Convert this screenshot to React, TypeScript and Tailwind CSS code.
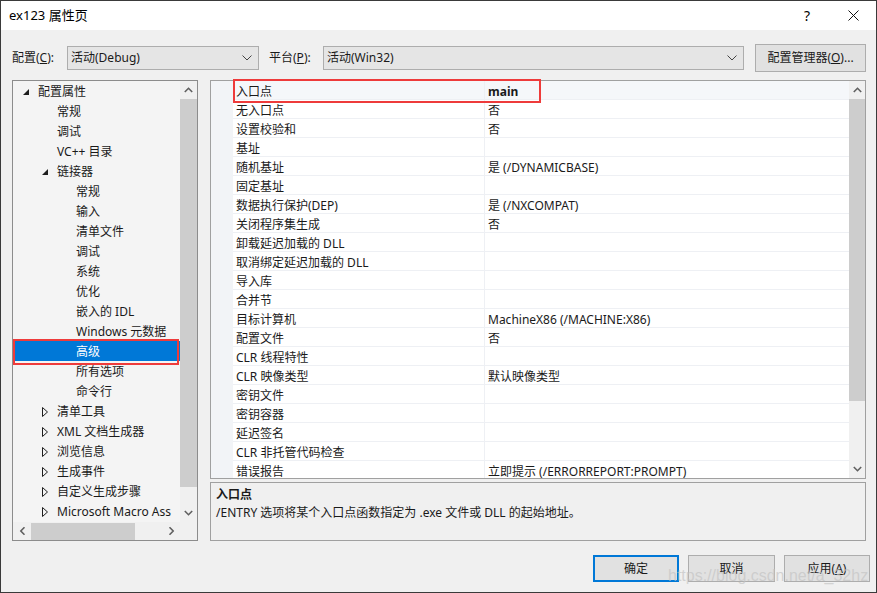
import React from "react";

const FONT = '"Noto Sans","Noto Sans CJK SC",sans-serif';

function Chevron({ dir, className = "" }: { dir: "up" | "down" | "left" | "right"; className?: string }) {
  const rot = { up: 0, right: 90, down: 180, left: 270 }[dir];
  return (
    <svg width="9" height="6" viewBox="0 0 9 6" className={className} style={{ transform: `rotate(${rot}deg)` }}>
      <path d="M0.8 5 L4.5 1.3 L8.2 5" fill="none" stroke="#606060" strokeWidth="1.6" />
    </svg>
  );
}

function ComboChevron() {
  return (
    <svg width="10" height="6" viewBox="0 0 10 6">
      <path d="M0.5 0.5 L5 5 L9.5 0.5" fill="none" stroke="#444" strokeWidth="1" />
    </svg>
  );
}

function Expanded() {
  return (
    <svg width="6" height="6" viewBox="0 0 6 6">
      <path d="M6 0 L6 6 L0 6 Z" fill="#1e1e1e" />
    </svg>
  );
}

function Collapsed() {
  return (
    <svg width="6" height="10" viewBox="0 0 6 10">
      <path d="M0.5 0.5 L5.5 5 L0.5 9.5 Z" fill="none" stroke="#1e1e1e" strokeWidth="1" />
    </svg>
  );
}

type TreeItem = { label: string; level: number; arrow?: "exp" | "col"; selected?: boolean };

const tree: TreeItem[] = [
  { label: "配置属性", level: 0, arrow: "exp" },
  { label: "常规", level: 1 },
  { label: "调试", level: 1 },
  { label: "VC++ 目录", level: 1 },
  { label: "链接器", level: 1, arrow: "exp" },
  { label: "常规", level: 2 },
  { label: "输入", level: 2 },
  { label: "清单文件", level: 2 },
  { label: "调试", level: 2 },
  { label: "系统", level: 2 },
  { label: "优化", level: 2 },
  { label: "嵌入的 IDL", level: 2 },
  { label: "Windows 元数据", level: 2 },
  { label: "高级", level: 2, selected: true },
  { label: "所有选项", level: 2 },
  { label: "命令行", level: 2 },
  { label: "清单工具", level: 1, arrow: "col" },
  { label: "XML 文档生成器", level: 1, arrow: "col" },
  { label: "浏览信息", level: 1, arrow: "col" },
  { label: "生成事件", level: 1, arrow: "col" },
  { label: "自定义生成步骤", level: 1, arrow: "col" },
  { label: "Microsoft Macro Ass", level: 1, arrow: "col" },
];

const props: [string, string][] = [
  ["入口点", "main"],
  ["无入口点", "否"],
  ["设置校验和", "否"],
  ["基址", ""],
  ["随机基址", "是 (/DYNAMICBASE)"],
  ["固定基址", ""],
  ["数据执行保护(DEP)", "是 (/NXCOMPAT)"],
  ["关闭程序集生成", "否"],
  ["卸载延迟加载的 DLL", ""],
  ["取消绑定延迟加载的 DLL", ""],
  ["导入库", ""],
  ["合并节", ""],
  ["目标计算机", "MachineX86 (/MACHINE:X86)"],
  ["配置文件", "否"],
  ["CLR 线程特性", ""],
  ["CLR 映像类型", "默认映像类型"],
  ["密钥文件", ""],
  ["密钥容器", ""],
  ["延迟签名", ""],
  ["CLR 非托管代码检查", ""],
  ["错误报告", "立即提示 (/ERRORREPORT:PROMPT)"],
];

export default function App() {
  return (
    <div
      className="w-[877px] h-[593px] border border-[#3a3a3a] bg-[#f0f0f0] flex flex-col relative overflow-hidden text-[12px] text-[#1a1a1a]"
      style={{ fontFamily: FONT }}
    >
      {/* Title bar */}
      <div className="h-[29px] bg-white flex items-center shrink-0">
        <span className="pl-[8px] text-[13px] text-black">ex123 属性页</span>
        <div className="ml-auto flex items-center">
          <span className="w-[46px] text-center text-[14px] text-black">?</span>
          <span className="w-[46px] flex justify-center">
            <svg width="11" height="11" viewBox="0 0 11 11">
              <path d="M0.5 0.5 L10.5 10.5 M10.5 0.5 L0.5 10.5" stroke="#111" strokeWidth="1" />
            </svg>
          </span>
        </div>
      </div>

      {/* Toolbar */}
      <div className="flex items-center h-[28px] mt-[14px] pl-[11px] shrink-0">
        <span className="w-[55px]">配置(<span className="underline">C</span>):</span>
        <div className="w-[192px] h-[24px] border border-[#adadad] bg-[#e5e5e5] flex items-center pl-[3px] pr-[6px]">
          <span>活动(Debug)</span>
          <span className="ml-auto"><ComboChevron /></span>
        </div>
        <span className="ml-[10px] w-[54px]">平台(<span className="underline">P</span>):</span>
        <div className="w-[421px] h-[24px] border border-[#adadad] bg-[#e5e5e5] flex items-center pl-[3px] pr-[6px]">
          <span>活动(Win32)</span>
          <span className="ml-auto"><ComboChevron /></span>
        </div>
        <div className="ml-[11px] w-[111px] h-[28px] border border-[#adadad] bg-[#e1e1e1] flex items-center justify-center">
          配置管理器(<span className="underline">O</span>)...
        </div>
      </div>

      {/* Main */}
      <div className="flex mt-[8px] pl-[11px] shrink-0">
        {/* Tree */}
        <div className="w-[186px] h-[461px] border border-[#8c8c8c] bg-[#f4f4f4] flex flex-col relative">
          <div className="flex h-[441px]">
            <div className="w-[167px] overflow-hidden">
              {tree.map((t, i) => (
                <div
                  key={i}
                  className={`h-[20px] pt-[2px] flex items-center whitespace-nowrap ${t.selected ? "bg-[#0078d7] text-white" : ""}`}
                >
                  <span
                    className="flex items-center justify-center w-[8px] shrink-0"
                    style={{ marginLeft: 9 + t.level * 19 }}
                  >
                    {t.arrow === "exp" ? <Expanded /> : t.arrow === "col" ? <Collapsed /> : null}
                  </span>
                  <span className="ml-[8px]">{t.label}</span>
                </div>
              ))}
            </div>
            <div className="w-[17px] bg-[#f0f0f0] flex flex-col">
              <div className="h-[18px] flex items-center justify-center"><Chevron dir="up" /></div>
              <div className="h-[388px] bg-[#cdcdcd]" />
              <div className="flex-1" />
              <div className="h-[18px] flex items-center justify-center"><Chevron dir="down" /></div>
            </div>
          </div>
          <div className="flex h-[18px]">
            <div className="w-[167px] bg-[#f0f0f0] flex items-center">
              <div className="w-[18px] flex items-center justify-center"><Chevron dir="left" /></div>
              <div className="w-[104px] h-[17px] bg-[#cdcdcd]" />
              <div className="flex-1" />
              <div className="w-[18px] flex items-center justify-center"><Chevron dir="right" /></div>
            </div>
            <div className="w-[17px] bg-[#f0f0f0]" />
          </div>
          {/* red highlight around selected */}
          <div className="absolute left-0 top-[258px] w-[166px] h-[26px] border-2 border-[#ee3b3b]" />
        </div>

        {/* Right column */}
        <div className="ml-[12px] w-[656px] flex flex-col">
          <div className="h-[399px] border border-[#a0a0a0] bg-white flex relative">
            <div className="w-[22px] bg-[#f2f4f7]" />
            <div className="w-[616px] overflow-hidden">
              {props.map(([k, v], i) => (
                <div key={i} className={`h-[19px] flex border-b border-[#eef0f4] ${i === 0 ? "bg-[#f5f7fa]" : ""}`}>
                  <div className="w-[252px] pl-[3px] pt-[3px] h-full flex items-center border-r border-[#eef0f4] whitespace-nowrap">{k}</div>
                  <div className={`pl-[3px] pt-[3px] h-full flex items-center whitespace-nowrap ${i === 0 ? "font-bold" : ""}`}>{v}</div>
                </div>
              ))}
            </div>
            <div className="w-[16px] bg-[#f0f0f0] flex flex-col">
              <div className="h-[18px] flex items-center justify-center"><Chevron dir="up" /></div>
              <div className="h-[302px] bg-[#cdcdcd]" />
              <div className="flex-1" />
              <div className="h-[18px] flex items-center justify-center"><Chevron dir="down" /></div>
            </div>
            <div className="absolute left-[22px] top-[-2px] w-[308px] h-[24px] border-2 border-[#ee3b3b]" />
          </div>
          <div className="mt-[3px] h-[59px] border border-[#a0a0a0] bg-[#f0f0f0] pl-[5px] pt-[3px] leading-[18px]">
            <div className="font-bold">入口点</div>
            <div>/ENTRY 选项将某个入口点函数指定为 .exe 文件或 DLL 的起始地址。</div>
          </div>
        </div>
      </div>

      {/* Buttons */}
      <div className="flex justify-end gap-[9px] mt-[14px] pr-[6px] shrink-0">
        <div className="w-[86px] h-[27px] border-2 border-[#0078d7] bg-[#e1e1e1] flex items-center justify-center">确定</div>
        <div className="w-[87px] h-[27px] border border-[#adadad] bg-[#e1e1e1] flex items-center justify-center">取消</div>
        <div className="w-[86px] h-[27px] border border-[#adadad] bg-[#e1e1e1] flex items-center justify-center">
          应用(<span className="underline">A</span>)
        </div>
      </div>

      {/* watermark */}
      <div className="absolute left-[667px] top-[563px] text-[16px] text-[#c4c4c4]/70 whitespace-nowrap" style={{ fontFamily: '"Liberation Sans",sans-serif' }}>
        https://blog.csdn.net/a_32hz
      </div>
    </div>
  );
}
